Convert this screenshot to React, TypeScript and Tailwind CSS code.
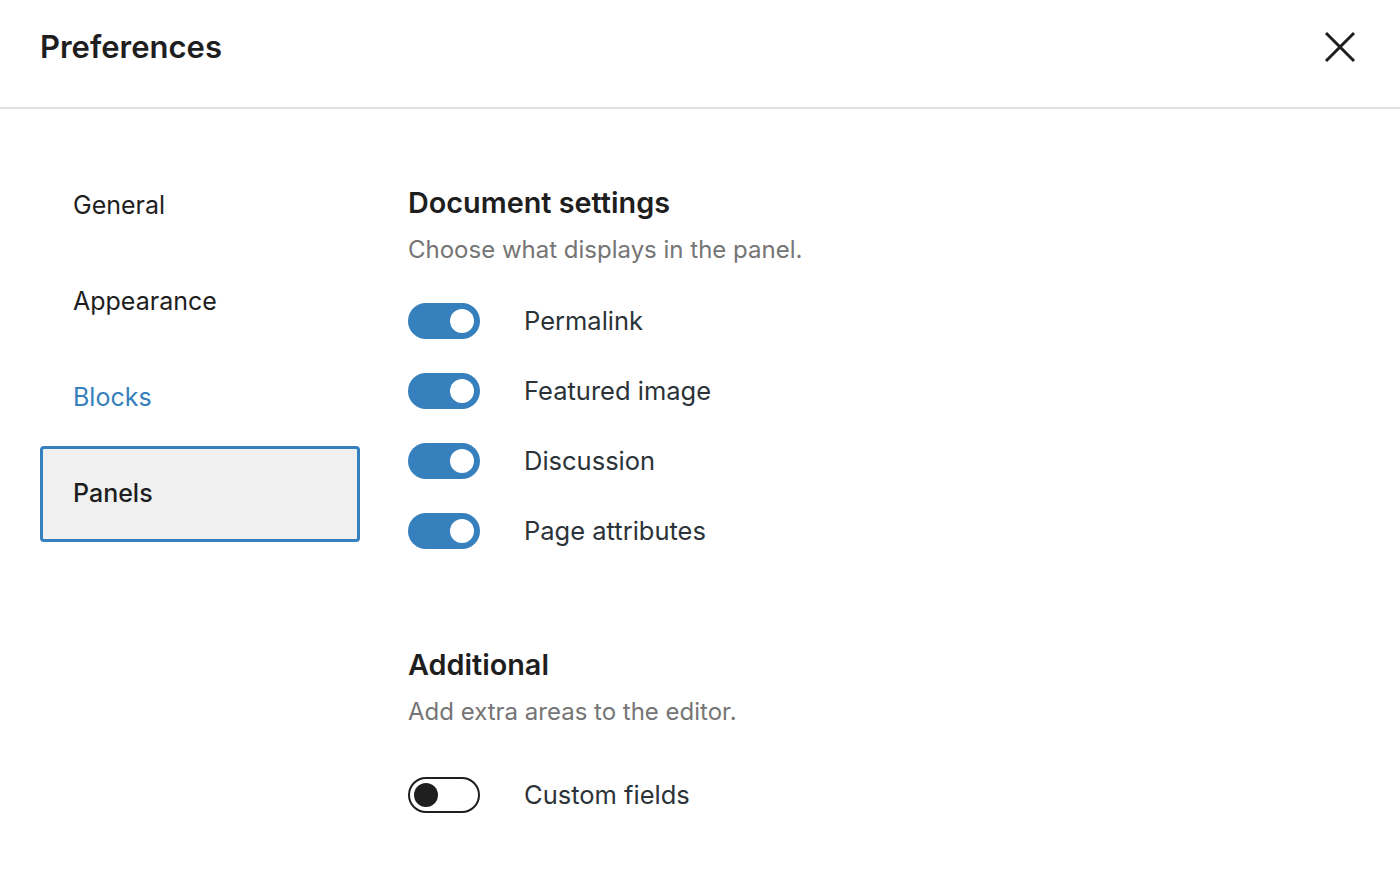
import React from "react";

function Toggle({ on }: { on: boolean }) {
  if (on) {
    return (
      <div className="flex h-[36px] w-[72px] shrink-0 items-center justify-end rounded-full bg-[#3580bd] pr-[6px]">
        <div className="h-[24px] w-[24px] rounded-full bg-white" />
      </div>
    );
  }
  return (
    <div className="flex h-[36px] w-[72px] shrink-0 items-center justify-start rounded-full border-2 border-[#1e1e1e] bg-white pl-[4px]">
      <div className="h-[24px] w-[24px] rounded-full bg-[#1e1e1e]" />
    </div>
  );
}

function Row({ label, on }: { label: string; on: boolean }) {
  return (
    <div className="flex h-[70px] items-center">
      <Toggle on={on} />
      <span className="ml-[44px] text-[25.5px] leading-[36px] text-[#2c3338]">{label}</span>
    </div>
  );
}

export default function App() {
  const items = ["General", "Appearance", "Blocks", "Panels"];
  return (
    <div
      className="h-[870px] w-[1400px] overflow-hidden bg-white"
      style={{ fontFamily: "Inter, 'Noto Sans', sans-serif" }}
    >
      <header className="flex h-[109px] items-center justify-between border-b-2 border-[#e0e0e0] pb-[14px] pl-[40px] pr-[36px]">
        <h1 className="text-[31px] font-semibold leading-[40px] text-[#1e1e1e]">Preferences</h1>
        <button className="flex h-[48px] w-[48px] items-center justify-center">
          <svg width="36" height="36" viewBox="0 0 36 36" fill="none">
            <path d="M4 4 L32 32 M32 4 L4 32" stroke="#1e1e1e" strokeWidth="3" />
          </svg>
        </button>
      </header>
      <div className="flex pl-[40px] pt-[49px]">
        <nav className="flex w-[320px] flex-col">
          {items.map((it) => {
            const selected = it === "Panels";
            const blue = it === "Blocks";
            return (
              <div
                key={it}
                className={
                  selected
                    ? "flex h-[96px] items-center rounded-[4px] border-[3px] border-[#3580bd] bg-[#f0f0f0] pl-[30px] text-[25px] font-medium text-[#1e1e1e]"
                    : blue
                    ? "flex h-[96px] items-center rounded-[4px] border-[3px] border-transparent pl-[30px] text-[25px] text-[#3580bd]"
                    : "flex h-[96px] items-center rounded-[4px] border-[3px] border-transparent pl-[30px] text-[25px] text-[#1e1e1e]"
                }
              >
                {it}
              </div>
            );
          })}
        </nav>
        <main className="ml-[48px] mt-[27px] flex flex-col">
          <h2 className="text-[28.8px] font-semibold leading-[36px] text-[#1e1e1e]">Document settings</h2>
          <p className="mt-[11px] text-[24px] leading-[36px] text-[#757575]">Choose what displays in the panel.</p>
          <div className="mt-[18px] flex flex-col">
            <Row label="Permalink" on />
            <Row label="Featured image" on />
            <Row label="Discussion" on />
            <Row label="Page attributes" on />
          </div>
          <h2 className="mt-[81px] text-[28.8px] font-semibold leading-[36px] text-[#1e1e1e]">Additional</h2>
          <p className="mt-[11px] text-[24px] leading-[36px] text-[#757575]">Add extra areas to the editor.</p>
          <div className="mt-[30px] flex flex-col">
            <Row label="Custom fields" on={false} />
          </div>
        </main>
      </div>
    </div>
  );
}
